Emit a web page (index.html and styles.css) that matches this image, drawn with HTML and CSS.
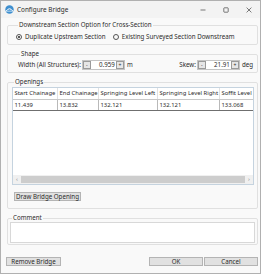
FILE: index.html
```
<!DOCTYPE html>
<html lang="en">

<head>
    <meta charset="UTF-8">
    <title>Configure Bridge</title>
    <link rel="stylesheet" href="styles.css">
</head>

<body>
    <div class="window">
        <div class="titlebar">
            <svg class="app-icon" width="9" height="9" viewBox="0 0 9 9">
                <circle cx="4.5" cy="4.5" r="4.2" fill="#3f8fcf"/>
                <path d="M1.2 6 Q4.5 1.5 7.8 6" fill="none" stroke="#fff" stroke-width="1"/>
                <path d="M1 6.2 H8" stroke="#dbeefa" stroke-width="0.8"/>
            </svg>
            <span class="title">Configure Bridge</span>
            <div class="controls">
                <span class="ctl">
                    <svg width="8" height="8" viewBox="0 0 8 8"><path d="M1.5 4 H6.5" stroke="#444" stroke-width="0.7"/></svg>
                </span>
                <span class="ctl">
                    <svg width="8" height="8" viewBox="0 0 8 8"><rect x="1.8" y="1.8" width="4.4" height="4.4" rx="0.6" fill="none" stroke="#444" stroke-width="0.7"/></svg>
                </span>
                <span class="ctl">
                    <svg width="8" height="8" viewBox="0 0 8 8"><path d="M1.6 1.6 L6.4 6.4 M6.4 1.6 L1.6 6.4" stroke="#444" stroke-width="0.7"/></svg>
                </span>
            </div>
        </div>

        <div class="content">
            <fieldset class="group group-option">
                <legend>Downstream Section Option for Cross-Section</legend>
                <div class="radio-row">
                    <label class="radio"><span class="dot checked"></span>Duplicate Upstream Section</label>
                    <label class="radio"><span class="dot"></span>Existing Surveyed Section Downstream</label>
                </div>
            </fieldset>

            <fieldset class="group group-shape">
                <legend>Shape</legend>
                <div class="shape-row">
                    <div class="field">
                        <span class="field-label">Width (All Structures):</span>
                        <span class="spin">
                            <span class="spin-btn">-</span>
                            <span class="spin-val">0.959</span>
                            <span class="spin-btn">+</span>
                        </span>
                        <span class="unit">m</span>
                    </div>
                    <div class="field">
                        <span class="field-label">Skew:</span>
                        <span class="spin">
                            <span class="spin-btn">-</span>
                            <span class="spin-val">21.91</span>
                            <span class="spin-btn">+</span>
                        </span>
                        <span class="unit">deg</span>
                    </div>
                </div>
            </fieldset>

            <fieldset class="group group-openings">
                <legend>Openings</legend>
                <div class="grid">
                    <div class="grid-body">
                        <div class="row head">
                            <span class="c1">Start Chainage</span>
                            <span class="c2">End Chainage</span>
                            <span class="c3">Springing Level Left</span>
                            <span class="c4">Springing Level Right</span>
                            <span class="c5">Soffit Level</span>
                        </div>
                        <div class="row data">
                            <span class="c1">11.439</span>
                            <span class="c2">13.832</span>
                            <span class="c3">132.121</span>
                            <span class="c4">132.121</span>
                            <span class="c5">133.068</span>
                        </div>
                    </div>
                    <div class="hscroll">
                        <span class="arrow">&#8249;</span>
                        <span class="thumb"></span>
                        <span class="arrow">&#8250;</span>
                    </div>
                </div>
                <button class="btn btn-draw">Draw Bridge Opening</button>
            </fieldset>

            <fieldset class="group group-comment">
                <legend>Comment</legend>
                <div class="comment-box"></div>
            </fieldset>

            <div class="footer">
                <button class="btn btn-remove">Remove Bridge</button>
                <div class="footer-right">
                    <button class="btn btn-ok">OK</button>
                    <button class="btn btn-cancel">Cancel</button>
                </div>
            </div>
        </div>
    </div>
</body>

</html>
```

FILE: styles.css
```
html,
body {
    margin: 0;
    padding: 0;
    background: #fff;
}

body {
    font-family: "Noto Sans", "Open Sans", sans-serif;
    font-size: 6.2px;
    color: #2b2b2b;
}

.window {
    width: 259px;
    height: 272px;
    border: 1px solid #b0b0b0;
    background: #f9f9f9;
    display: flex;
    flex-direction: column;
}

/* title bar */
.titlebar {
    height: 17px;
    display: flex;
    align-items: center;
    padding-left: 4px;
    background: #f3f3f3;
}

.app-icon {
    margin-right: 3px;
}

.title {
    font-size: 6.4px;
}

.controls {
    margin-left: auto;
    display: flex;
}

.ctl {
    width: 23px;
    height: 17px;
    display: flex;
    align-items: center;
    justify-content: center;
}

/* content */
.content {
    padding: 3px 2px 0 6px;
    display: flex;
    flex-direction: column;
}

.group {
    margin: 0;
    border: 1px solid #e0e0e0;
    border-radius: 2px;
    min-width: 0;
}

.group legend {
    padding: 0 1px;
    margin-left: 2px;
    line-height: 8px;
}

.group-option {
    padding: 3px 4px 3px 8px;
}

.group-shape {
    margin-top: 5px;
    padding: 2px 4px 3px 10px;
}

.group-openings {
    margin-top: 5px;
    padding: 1px 3px 7px 4px;
}

.group-comment {
    margin-top: 5px;
    padding: 0 2px 1px 2px;
}

/* radios */
.radio-row {
    display: flex;
    gap: 7px;
    height: 9px;
    align-items: center;
}

.radio {
    display: flex;
    align-items: center;
}

.dot {
    width: 4px;
    height: 4px;
    border: 0.8px solid #555;
    border-radius: 50%;
    margin-right: 3px;
    position: relative;
}

.dot.checked::after {
    content: "";
    position: absolute;
    left: 1px;
    top: 1px;
    width: 2px;
    height: 2px;
    border-radius: 50%;
    background: #222;
}

/* shape row */
.shape-row {
    display: flex;
    justify-content: space-between;
    align-items: center;
    height: 9px;
}

.field {
    display: flex;
    align-items: center;
}

.field-label {
    margin-right: 1px;
}

.spin {
    display: flex;
    height: 8px;
    border: 1px solid #c4c4c4;
    background: #fff;
}

.spin-btn {
    width: 6px;
    background: #e6e6e6;
    border: 0.5px solid #9a9a9a;
    font-size: 5px;
    line-height: 7px;
    text-align: center;
}

.spin-val {
    width: 24px;
    text-align: right;
    line-height: 8px;
    padding-right: 1px;
}

.unit {
    margin-left: 2px;
}

/* openings grid */
.grid {
    height: 96px;
    border: 1px solid #c5d3df;
    background: #fff;
    display: flex;
    flex-direction: column;
    overflow: hidden;
    font-size: 5.9px;
}

.grid-body {
    flex: 1;
    overflow: hidden;
}

.row {
    display: flex;
    height: 11px;
    white-space: nowrap;
}

.row span {
    flex: none;
    padding-left: 1.5px;
    line-height: 11px;
    border-right: 1px solid #b9b9b9;
    box-sizing: border-box;
    overflow: hidden;
}

.row.head {
    border-bottom: 1px solid #c8c8c8;
    height: 11px;
}

.row.head span {
    border-right-color: #e1e1e1;
}

.row.data {
    border-bottom: 1px solid #6f6f6f;
    height: 10px;
}

.row.data span {
    line-height: 10px;
}

.c1 { width: 45px; }
.c2 { width: 41px; }
.c3 { width: 59px; }
.c4 { width: 62px; }
.c5 { width: 40px; }

.hscroll {
    height: 9px;
    display: flex;
    background: #f0f0f0;
}

.arrow {
    width: 8px;
    font-size: 6px;
    line-height: 9px;
    text-align: center;
    color: #8a8a8a;
}

.thumb {
    flex: 1;
    margin: 1px 0;
    background: #cdcdcd;
}

/* buttons */
.btn {
    font-family: inherit;
    font-size: 6.2px;
    color: #2b2b2b;
    background: #e1e1e1;
    border: 1px solid #b4b4b4;
    padding: 0;
    height: 9px;
    line-height: 7px;
}

.btn-draw {
    margin-top: 7px;
    width: 67px;
    margin-left: 2px;
}

.comment-box {
    height: 19px;
    border: 1px solid #d8d8d8;
    background: #fff;
}

.footer {
    margin-top: 12px;
    display: flex;
    justify-content: space-between;
    margin-left: -1px;
}

.footer-right {
    display: flex;
    gap: 1px;
}

.btn-remove {
    width: 55px;
}

.btn-ok,
.btn-cancel {
    width: 54px;
}
```
